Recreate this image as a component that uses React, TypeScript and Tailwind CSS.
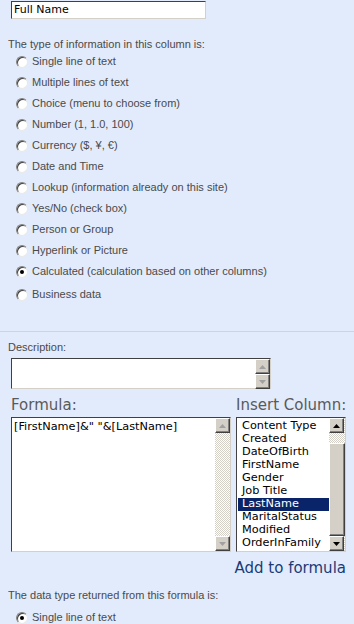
import React from "react";

const types = [
  "Single line of text",
  "Multiple lines of text",
  "Choice (menu to choose from)",
  "Number (1, 1.0, 100)",
  "Currency ($, ¥, €)",
  "Date and Time",
  "Lookup (information already on this site)",
  "Yes/No (check box)",
  "Person or Group",
  "Hyperlink or Picture",
  "Calculated (calculation based on other columns)",
];

const columns = [
  "Content Type",
  "Created",
  "DateOfBirth",
  "FirstName",
  "Gender",
  "Job Title",
  "LastName",
  "MaritalStatus",
  "Modified",
  "OrderInFamily",
];

function Radio({ checked }: { checked?: boolean }) {
  return (
    <span className="relative inline-flex w-[12px] h-[12px] shrink-0 items-center justify-center rounded-full border border-t-[#808080] border-l-[#808080] border-r-[#e8e8e8] border-b-[#e8e8e8] bg-white shadow-[inset_1px_1px_0_#404040]">
      {checked && <span className="w-[4px] h-[4px] rounded-full bg-black" />}
    </span>
  );
}

function Arrow({ dir, dark }: { dir: "up" | "down"; dark?: boolean }) {
  const color = dark ? "#000000" : "#a0a0a0";
  return (
    <svg width="7" height="4" viewBox="0 0 7 4">
      {dir === "up" ? (
        <path d="M0 4 L3.5 0 L7 4 Z" fill={color} />
      ) : (
        <path d="M0 0 L3.5 4 L7 0 Z" fill={color} />
      )}
    </svg>
  );
}

function ScrollButton({ dir, dark }: { dir: "up" | "down"; dark?: boolean }) {
  return (
    <div className="w-[15px] h-[15px] shrink-0 flex items-center justify-center bg-[#d4d0c8] border border-t-white border-l-white border-r-[#404040] border-b-[#404040] shadow-[inset_-1px_-1px_0_#808080]">
      <Arrow dir={dir} dark={dark} />
    </div>
  );
}

const checker =
  "bg-[repeating-conic-gradient(#d4d0c8_0_25%,#ffffff_0_50%)] bg-[length:2px_2px]";

const small = "font-['Liberation_Sans',sans-serif] text-[11px] text-[#4a4a4a]";

export default function App() {
  return (
    <div className="w-[354px] h-[624px] overflow-hidden bg-[#e2ebfc]">
      {/* Column name */}
      <div className="pt-[1px] pl-[11px]">
        <div className="w-[195px] h-[18px] bg-white border border-t-[#404040] border-l-[#404040] border-r-[#d4d0c8] border-b-[#d4d0c8] flex items-center pl-[2px] font-['DejaVu_Sans',sans-serif] text-[11px] text-black">
          Full Name
        </div>
      </div>

      {/* Column type */}
      <div className={`${small} pl-[8px] h-[14px] mt-[18px] flex items-center`}>
        The type of information in this column is:
      </div>
      <div className="pl-[16px]">
        {types.map((t, i) => (
          <div key={t} className="h-[21px] flex items-center gap-[4px]">
            <Radio checked={i === types.length - 1} />
            <span className={small}>{t}</span>
          </div>
        ))}
        <div className="h-[21px] mt-[2px] flex items-center gap-[4px]">
          <Radio />
          <span className={small}>Business data</span>
        </div>
      </div>

      <div className="mt-[26px] h-px bg-[#c6d4ef]" />

      {/* Description */}
      <div className={`${small} pl-[8px] mt-[8px] h-[14px] flex items-center`}>
        Description:
      </div>
      <div className="ml-[11px] mt-[4px] w-[260px] h-[31px] flex bg-white border border-t-[#404040] border-l-[#404040] border-r-[#d4d0c8] border-b-[#d4d0c8]">
        <div className="flex-1" />
        <div className="flex flex-col">
          <ScrollButton dir="up" />
          <ScrollButton dir="down" />
        </div>
      </div>

      {/* Formula / Insert column */}
      <div className="flex mt-[6px] pl-[11px] gap-[5px]">
        <div className="w-[220px] flex flex-col">
          <div className="h-[20px] flex items-center font-['DejaVu_Sans',sans-serif] text-[15px] text-[#5a5a5a]">
            Formula:
          </div>
          <div className="mt-[2px] h-[135px] flex bg-white border border-t-[#404040] border-l-[#404040] border-r-[#d4d0c8] border-b-[#d4d0c8]">
            <div className="flex-1 pl-[2px] pt-[2px] font-['DejaVu_Sans',sans-serif] text-[11.3px] leading-[13px] text-black whitespace-pre">
              {'[FirstName]&" "&[LastName]'}
            </div>
            <div className={`w-[15px] flex flex-col ${checker}`}>
              <ScrollButton dir="up" />
              <div className="flex-1" />
              <ScrollButton dir="down" />
            </div>
          </div>
        </div>
        <div className="w-[110px] flex flex-col">
          <div className="h-[20px] flex items-center font-['DejaVu_Sans',sans-serif] text-[15px] text-[#5a5a5a] whitespace-nowrap">
            Insert Column:
          </div>
          <div className="mt-[2px] h-[135px] flex bg-white border border-t-[#404040] border-l-[#404040] border-r-[#d4d0c8] border-b-[#d4d0c8]">
            <div className="flex-1 pt-[2px] pl-[1px] overflow-hidden">
              {columns.map((c) => (
                <div
                  key={c}
                  className={`h-[13px] flex items-center pl-[4px] font-['DejaVu_Sans',sans-serif] text-[11.3px] whitespace-nowrap ${
                    c === "LastName" ? "bg-[#0a246a] text-white" : "text-black"
                  }`}
                >
                  {c}
                </div>
              ))}
            </div>
            <div className={`w-[16px] flex flex-col ${checker}`}>
              <ScrollButton dir="up" dark />
              <div className="h-[10px]" />
              <div className="flex-1 bg-[#d4d0c8] border border-t-white border-l-white border-r-[#404040] border-b-[#404040] shadow-[inset_-1px_-1px_0_#808080]" />
              <ScrollButton dir="down" dark />
            </div>
          </div>
        </div>
      </div>

      <div className="mt-[6px] h-[20px] pr-[8px] flex items-center justify-end">
        <span className="font-['DejaVu_Sans',sans-serif] text-[15px] text-[#1b3b78]">
          Add to formula
        </span>
      </div>

      <div className={`${small} pl-[8px] mt-[10px] h-[14px] flex items-center`}>
        The data type returned from this formula is:
      </div>
      <div className="pl-[16px] mt-[5px] h-[21px] flex items-center gap-[4px]">
        <Radio checked />
        <span className={small}>Single line of text</span>
      </div>
    </div>
  );
}
